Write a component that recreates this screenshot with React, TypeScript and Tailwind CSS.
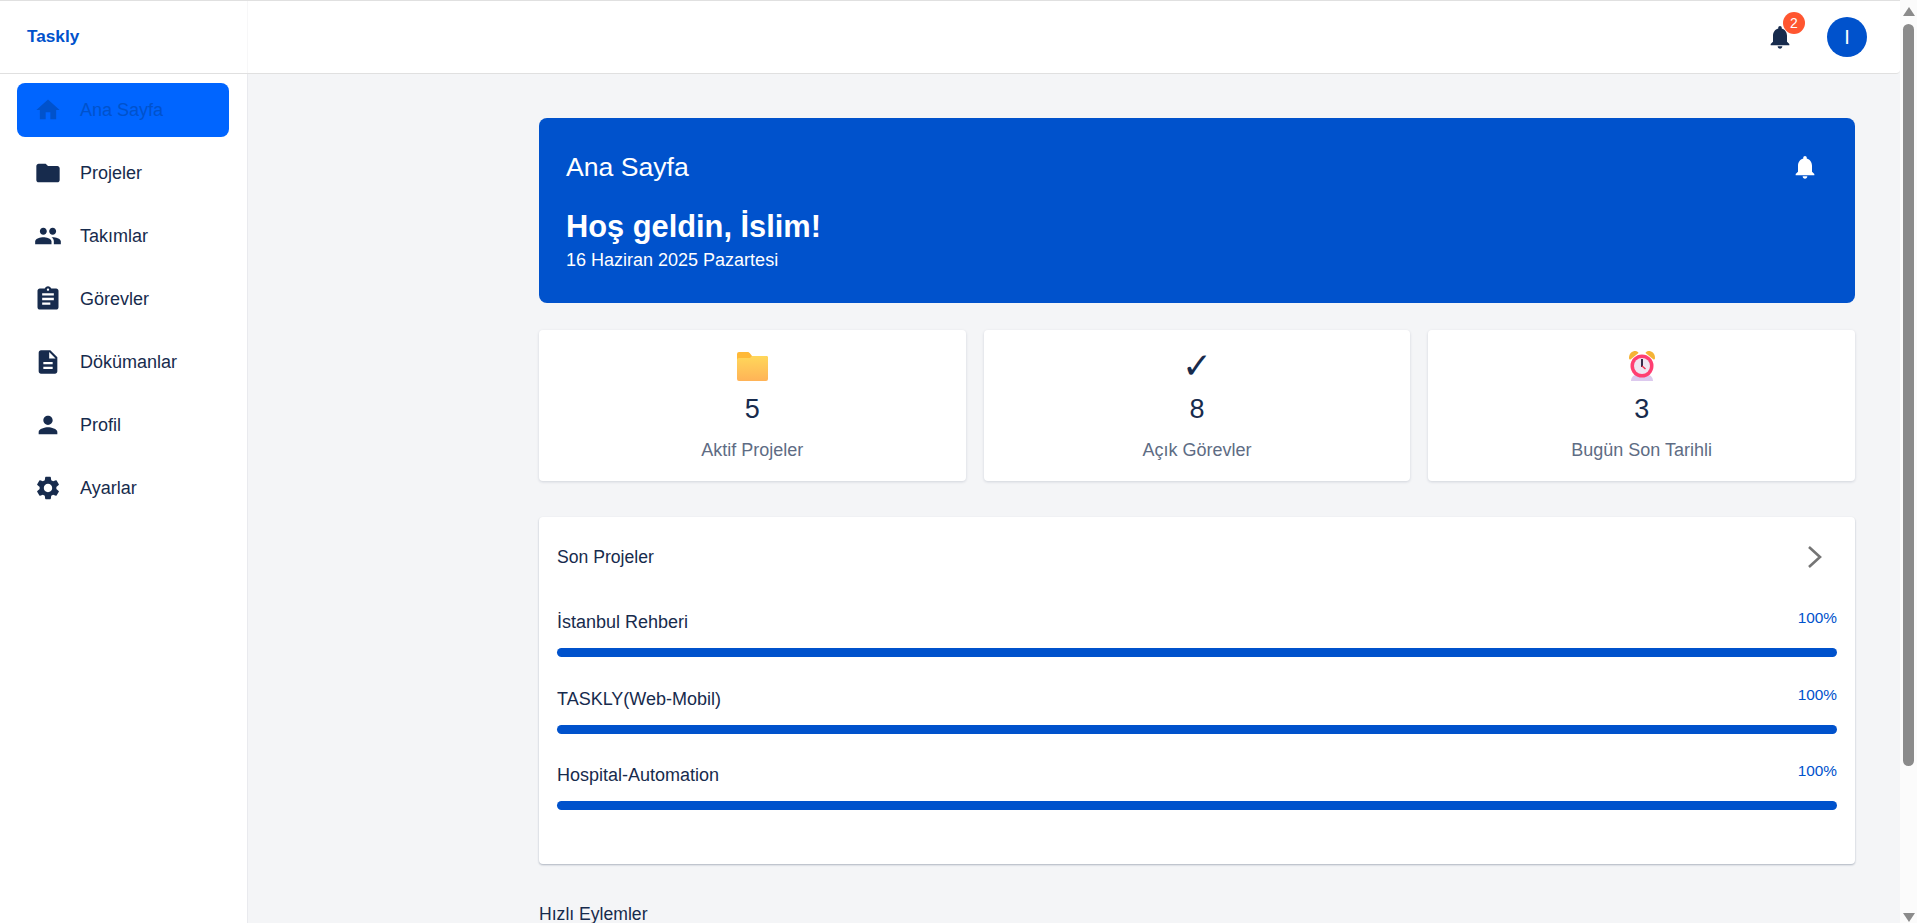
import React from 'react';

const paths = {
  home: 'M10 20v-6h4v6h5v-8h3L12 3 2 12h3v8z',
  folder: 'M10 4H4c-1.1 0-1.99.9-1.99 2L2 18c0 1.1.9 2 2 2h16c1.1 0 2-.9 2-2V8c0-1.1-.9-2-2-2h-8l-2-2z',
  people:
    'M16 11c1.66 0 2.99-1.34 2.99-3S17.66 5 16 5c-1.66 0-3 1.34-3 3s1.34 3 3 3zm-8 0c1.66 0 2.99-1.34 2.99-3S9.66 5 8 5C6.34 5 5 6.34 5 8s1.34 3 3 3zm0 2c-2.33 0-7 1.17-7 3.5V19h14v-2.5c0-2.33-4.67-3.5-7-3.5zm8 0c-.29 0-.62.02-.97.05 1.16.84 1.97 1.97 1.97 3.45V19h6v-2.5c0-2.33-4.67-3.5-7-3.5z',
  assignment:
    'M19 3h-4.18C14.4 1.84 13.3 1 12 1c-1.3 0-2.4.84-2.82 2H5c-1.1 0-2 .9-2 2v14c0 1.1.9 2 2 2h14c1.1 0 2-.9 2-2V5c0-1.1-.9-2-2-2zm-7 0c.55 0 1 .45 1 1s-.45 1-1 1-1-.45-1-1 .45-1 1-1zm2 14H7v-2h7v2zm3-4H7v-2h10v2zm0-4H7V7h10v2z',
  description:
    'M14 2H6c-1.1 0-1.99.9-1.99 2L4 20c0 1.1.89 2 1.99 2H18c1.1 0 2-.9 2-2V8l-6-6zm2 16H8v-2h8v2zm0-4H8v-2h8v2zm-3-5V3.5L18.5 9H13z',
  person: 'M12 12c2.21 0 4-1.79 4-4s-1.79-4-4-4-4 1.79-4 4 1.79 4 4 4zm0 2c-2.67 0-8 1.34-8 4v2h16v-2c0-2.66-5.33-4-8-4z',
  settings:
    'M19.14 12.94c.04-.3.06-.61.06-.94 0-.32-.02-.64-.07-.94l2.03-1.58c.18-.14.23-.41.12-.61l-1.92-3.32c-.12-.22-.37-.29-.59-.22l-2.39.96c-.5-.38-1.03-.7-1.62-.94l-.36-2.54c-.04-.24-.24-.41-.48-.41h-3.84c-.24 0-.43.17-.47.41l-.36 2.54c-.59.24-1.13.57-1.62.94l-2.39-.96c-.22-.08-.47 0-.59.22L2.74 8.87c-.12.21-.08.47.12.61l2.03 1.58c-.05.3-.09.63-.09.94s.02.64.07.94l-2.03 1.58c-.18.14-.23.41-.12.61l1.92 3.32c.12.22.37.29.59.22l2.39-.96c.5.38 1.03.7 1.62.94l.36 2.54c.05.24.24.41.48.41h3.84c.24 0 .44-.17.47-.41l.36-2.54c.59-.24 1.13-.56 1.62-.94l2.39.96c.22.08.47 0 .59-.22l1.92-3.32c.12-.22.07-.47-.12-.61l-2.01-1.58zM12 15.6c-1.98 0-3.6-1.62-3.6-3.6s1.62-3.6 3.6-3.6 3.6 1.62 3.6 3.6-1.62 3.6-3.6 3.6z',
  bell: 'M12 22c1.1 0 2-.9 2-2h-4c0 1.1.89 2 2 2zm6-6v-5c0-3.07-1.64-5.64-4.5-6.32V4c0-.83-.67-1.5-1.5-1.5s-1.5.67-1.5 1.5v.68C7.63 5.36 6 7.92 6 11v5l-2 2v1h16v-1l-2-2z',
};

function Icon({ d, className }: { d: string; className?: string }) {
  return (
    <svg viewBox="0 0 24 24" fill="currentColor" className={className}>
      <path d={d} />
    </svg>
  );
}

const navItems = [
  { label: 'Ana Sayfa', icon: paths.home, active: true },
  { label: 'Projeler', icon: paths.folder },
  { label: 'Takımlar', icon: paths.people },
  { label: 'Görevler', icon: paths.assignment },
  { label: 'Dökümanlar', icon: paths.description },
  { label: 'Profil', icon: paths.person },
  { label: 'Ayarlar', icon: paths.settings },
];

const projects = ['İstanbul Rehberi', 'TASKLY(Web-Mobil)', 'Hospital-Automation'];

function FolderEmoji() {
  return (
    <svg viewBox="0 0 32 30" className="w-[32px] h-[30px]">
      <defs>
        <linearGradient id="folderFront" x1="0" y1="0" x2="0" y2="1">
          <stop offset="0" stopColor="#FFD75A" />
          <stop offset="1" stopColor="#FFB357" />
        </linearGradient>
      </defs>
      <path d="M1 3a2 2 0 0 1 2-2h8.5c1 0 1.6.4 2.2 1.1L16 5h14a2 2 0 0 1 2 2v4H1z" fill="#FFB938" />
      <path d="M1 9c0-1 .8-2 2-2h11l2-2h14c1.1 0 2 .9 2 2v21a2 2 0 0 1-2 2H3a2 2 0 0 1-2-2z" fill="url(#folderFront)" />
    </svg>
  );
}

function ClockEmoji() {
  return (
    <svg viewBox="0 0 28 31" className="w-[28px] h-[31px]">
      <path d="M1 8C1 3.5 4 1 7.5 1c1.7 0 2.5 1 3 2L2.5 9.5C1.6 9.5 1 9 1 8z" fill="#F5B335" />
      <path d="M27 8c0-4.500-3-7-6.500-7-1.700 0-2.500 1-3 2l8 6.500c.9 0 1.500-.500 1.500-1.500z" fill="#F5B335" />
      <path d="M3 31c0-3 2-6 5-6h12c3 0 5 3 5 6z" fill="#DCC9EE" />
      <circle cx="14" cy="16" r="11.500" fill="#FF3F72" />
      <circle cx="14" cy="16" r="8" fill="#EFE6F2" />
      <path d="M13 9h2v8h-2z" fill="#3A2F4D" />
      <path d="M14 16l3.500 3" stroke="#F0304F" strokeWidth="1.500" />
    </svg>
  );
}

function StatCard({ icon, value, label }: { icon: React.ReactNode; value: string; label: string }) {
  return (
    <div className="flex flex-col items-center h-[151px] bg-white rounded shadow-[0_1px_3px_rgba(9,30,66,0.15)]">
      <div className="flex items-center justify-center h-[31px] mt-[20px]">{icon}</div>
      <div className="mt-[10px] text-[27px] leading-[36px] text-[#172B4D]">{value}</div>
      <div className="mt-[11px] text-[18px] leading-[24px] text-[#5E6C84]">{label}</div>
    </div>
  );
}

export default function App() {
  return (
    <div className="flex h-[923px] overflow-hidden bg-[#F4F5F7] text-[#172B4D]" style={{ fontFamily: '"Liberation Sans", Arial, sans-serif' }}>
      <div className="flex flex-col flex-1 min-w-0">
        {/* Top bar */}
        <header className="flex h-[74px] shrink-0 bg-white border-t border-b border-[#E0E0E0] rounded-br">
          <div className="flex items-center w-[248px] pl-[27px] border-r border-[#F7F7F8]">
            <span className="text-[17.2px] font-bold text-[#0052CC]">Taskly</span>
          </div>
          <div className="flex flex-1 items-center justify-end pr-[33px]">
            <div className="relative mr-[33px] w-[28px] h-[28px]">
              <Icon d={paths.bell} className="w-[28px] h-[28px] text-[#172B4D]" />
              <span className="absolute -top-[11px] left-[17px] flex items-center justify-center w-[22px] h-[22px] rounded-full bg-[#FF5630] text-white text-[14px]">
                2
              </span>
            </div>
            <div className="flex items-center justify-center w-[40px] h-[40px] rounded-full bg-[#0052CC] text-white text-[20px]">I</div>
          </div>
        </header>

        <div className="flex flex-1 min-h-0">
          {/* Sidebar */}
          <aside className="w-[248px] shrink-0 bg-white border-r border-[#E9EAEE] pt-[9px] px-[17px]">
            <nav className="flex flex-col gap-[9px]">
              {navItems.map((item) => (
                <div
                  key={item.label}
                  className={
                    item.active
                      ? 'flex items-center h-[54px] w-[212px] pl-[17px] rounded-lg bg-[#0065FF] text-[#0052CC]'
                      : 'flex items-center h-[54px] w-[212px] pl-[17px] rounded-lg text-[#172B4D]'
                  }
                >
                  <Icon d={item.icon} className="w-[28px] h-[28px] shrink-0" />
                  <span className="ml-[18px] text-[18px]">{item.label}</span>
                </div>
              ))}
            </nav>
          </aside>

          {/* Main */}
          <main className="flex-1 min-w-0 pt-[44px] pl-[291px] pr-[45px]">
            <section className="h-[185px] rounded-lg bg-[#0052CC] text-white pt-[31px] px-[27px]">
              <div className="flex items-center justify-between">
                <h1 className="text-[26.6px] leading-[36px]">Ana Sayfa</h1>
                <Icon d={paths.bell} className="w-[28px] h-[28px] mr-[9px]" />
              </div>
              <div className="mt-[23px] text-[30.8px] leading-[38px] font-bold">Hoş geldin, İslim!</div>
              <div className="mt-[2px] text-[18px] leading-[24px]">16 Haziran 2025 Pazartesi</div>
            </section>

            <section className="grid grid-cols-3 gap-[18px] mt-[27px]">
              <StatCard icon={<FolderEmoji />} value="5" label="Aktif Projeler" />
              <StatCard
                icon={<span className="text-[36px] leading-[31px]" style={{ fontFamily: '"DejaVu Sans", sans-serif' }}>✓</span>}
                value="8"
                label="Açık Görevler"
              />
              <StatCard icon={<ClockEmoji />} value="3" label="Bugün Son Tarihli" />
            </section>

            <section className="h-[347px] mt-[36px] px-[18px] pt-[22px] bg-white rounded shadow-[0_1px_2px_rgba(9,30,66,0.3)]">
              <div className="flex items-center justify-between h-[36px]">
                <h2 className="text-[17.6px]">Son Projeler</h2>
                <svg viewBox="0 0 16 24" className="w-[16px] h-[24px] mr-[14px]" fill="none" stroke="#757575" strokeWidth="2.600">
                  <path d="M2 2l11 10-11 10" />
                </svg>
              </div>
              <div className="flex flex-col gap-[14.500px] mt-[20px]">
                {projects.map((name) => (
                  <div key={name}>
                    <div className="flex justify-between h-[53px]">
                      <span className="text-[18px] leading-[24px] pt-[15px]">{name}</span>
                      <span className="text-[15.4px] leading-[20px] pt-[13px] text-[#0052CC]">100%</span>
                    </div>
                    <div className="h-[9px] rounded-full bg-[#0052CC]" />
                  </div>
                ))}
              </div>
            </section>

            <h3 className="mt-[38px] text-[17.6px] leading-[24px]">Hızlı Eylemler</h3>
          </main>
        </div>
      </div>

      {/* Scrollbar */}
      <div className="flex flex-col items-center justify-between w-[17px] shrink-0 bg-[#FBFBFB] pt-[7px] pb-[1px]">
        <svg viewBox="0 0 12 9" className="w-[12px] h-[9px]"><path d="M6 0l6 9H0z" fill="#8B8B8B" /></svg>
        <div className="w-[11px] h-[742px] mt-[8px] rounded-full bg-[#8B8B8B]" />
        <svg viewBox="0 0 12 9" className="w-[12px] h-[9px] mt-auto"><path d="M6 9L0 0h12z" fill="#8B8B8B" /></svg>
      </div>
    </div>
  );
}
